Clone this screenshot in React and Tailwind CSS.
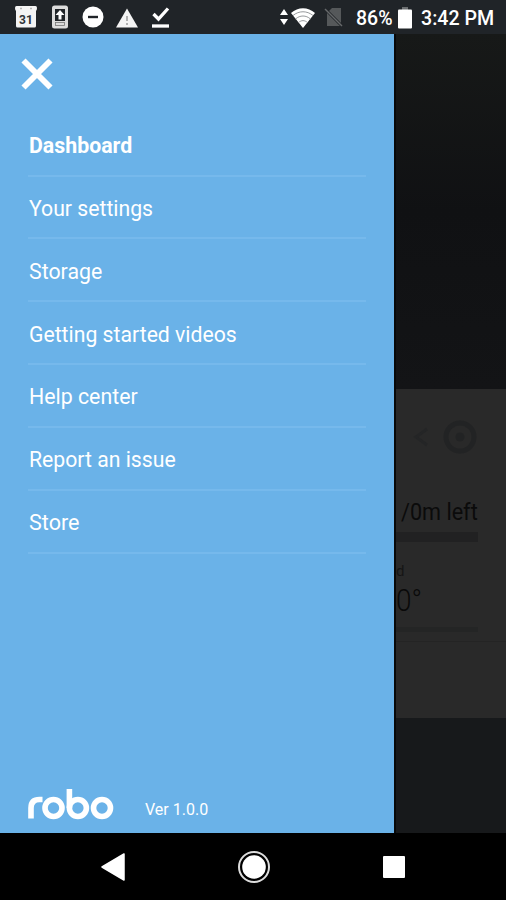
const menu = [
  { label: "Dashboard", cls: "font-bold scale-x-[0.935]" },
  { label: "Your settings", cls: "scale-x-[0.93]" },
  { label: "Storage", cls: "scale-x-[0.935]" },
  { label: "Getting started videos", cls: "scale-x-[0.93]" },
  { label: "Help center", cls: "scale-x-[0.935]" },
  { label: "Report an issue", cls: "scale-x-[0.93]" },
  { label: "Store", cls: "scale-x-[0.945]" },
];

function StatusBar() {
  return (
    <header className="flex h-[34px] w-full shrink-0 items-center bg-[#202428] text-white">
      <svg className="ml-[14px] shrink-0" width="24" height="24" viewBox="0 0 24 24">
        <path d="M2.500 1h19q1.500 0 1.500 2t-1 3v15q0 1.500-1.500 1.500h-17Q2 22.500 2 21V6Q1 5 1 3t1.500-2z" fill="#f4f4f4" />
        <path d="M6 3.500h2M16 3.500h2" stroke="#b5b5b5" strokeWidth="1.500" />
        <text x="12" y="18.500" textAnchor="middle" fontFamily="Roboto, sans-serif" fontWeight="700" fontSize="12" fill="#303438">31</text>
      </svg>
      <svg className="ml-[14px] shrink-0" width="16" height="24" viewBox="0 0 16 24">
        <rect x="0" y="0.500" width="16" height="23" rx="2.500" fill="#dcdcdc" />
        <rect x="3" y="4" width="10" height="12" fill="#202428" />
        <path d="M8 5l4.500 5H9.500v4.500h-3V10h-3z" fill="#fff" />
        <rect x="3.500" y="17.500" width="9" height="3" fill="none" stroke="#777" strokeWidth="0.800" />
      </svg>
      <svg className="ml-[14px] shrink-0" width="22" height="22" viewBox="0 0 22 22">
        <circle cx="11" cy="11" r="10.500" fill="#fff" />
        <path d="M6 11h10" stroke="#202428" strokeWidth="2.400" />
      </svg>
      <svg className="ml-[12px] shrink-0" width="22" height="22" viewBox="0 0 22 22">
        <path d="M11 2.500L22 21.500H0z" fill="#f4f4f4" />
        <path d="M11 10v5M11 17v2" stroke="#aaa" strokeWidth="1.800" />
      </svg>
      <svg className="ml-[13px] shrink-0" width="20" height="22" viewBox="0 0 20 22">
        <path d="M2.500 8l5 5L17 2.500" fill="none" stroke="#fff" strokeWidth="3.300" />
        <path d="M1 20h17" stroke="#fff" strokeWidth="3.300" />
      </svg>
      <svg className="ml-[109px] shrink-0" width="8" height="18" viewBox="0 0 8 18">
        <path d="M4 1l4 6H0zM4 17l4-6H0z" fill="#fff" />
      </svg>
      <svg className="ml-[3px] shrink-0" width="24" height="21" viewBox="0 0 24 21">
        <path d="M12 21L0 6C7-.5 17-.5 24 6z" fill="#fff" />
        <path d="M2 8.500c6-5 14-5 20 0M4.500 12c4.500-4 10.500-4 15 0M7.500 15.500c3-2.500 6-2.500 9 0" fill="none" stroke="#8a8d90" strokeWidth="0.900" />
      </svg>
      <svg className="ml-[9px] shrink-0" width="20" height="20" viewBox="0 0 20 20">
        <path d="M8 1h9v18H3V6z" fill="#55585a" />
        <path d="M1 2l17 17" stroke="#202428" strokeWidth="3" />
        <path d="M1 2l17 17" stroke="#66696b" strokeWidth="1.500" />
      </svg>
      <span className="ml-[12px] mt-[3px] w-[37px] origin-left whitespace-nowrap text-[19.500px] font-medium leading-none">86%</span>
      <svg className="ml-[5px] mt-px shrink-0" width="14" height="22" viewBox="0 0 14 22">
        <path d="M4 0h6v3H4z" fill="#6b6e70" />
        <rect y="2.500" width="14" height="19" rx="1" fill="#fff" />
      </svg>
      <span className="ml-[9px] mt-[3px] whitespace-nowrap text-[19.600px] font-medium leading-none">3:42 PM</span>
    </header>
  );
}

function Logo() {
  return (
    <svg width="86" height="32" viewBox="0 0 86 32" fill="none" stroke="#fff" strokeWidth="5.600" aria-label="robo">
      <path d="M3 30.500V20q0-8.500 8.500-8.500h3" />
      <circle cx="25.500" cy="20" r="8.500" />
      <path d="M41.400 1v19" />
      <circle cx="49.900" cy="20" r="8.500" />
      <circle cx="74" cy="20" r="8.500" />
    </svg>
  );
}

function Drawer() {
  return (
    <aside className="flex w-[394px] shrink-0 flex-col bg-[#6ab2e8] text-white">
      <svg className="ml-[20px] mt-[23px] shrink-0" width="34" height="34" viewBox="0 0 34 34">
        <path d="M3.500 3.500l27 27M30.500 3.500l-27 27" stroke="#fff" strokeWidth="5.800" />
      </svg>
      <nav className="ml-[28px] mt-[22.800px] w-[338px]">
        {menu.map((m) => (
          <div key={m.label} className="flex h-[62.850px] items-center border-b-2 border-[#76b9ec] pl-px pt-[4.500px]">
            <span className={"block origin-left whitespace-nowrap text-[22.800px] leading-none " + m.cls}>{m.label}</span>
          </div>
        ))}
      </nav>
      <div className="mb-[13px] ml-[28px] mt-auto flex items-end">
        <Logo />
        <span className="mb-[2px] ml-[31px] text-[16px] leading-none">Ver 1.0.0</span>
      </div>
    </aside>
  );
}

function Backdrop() {
  return (
    <main className="flex flex-1 flex-col overflow-hidden border-l-2 border-[#08090a] bg-[#17191b]">
      <div className="h-[355px] bg-linear-to-b from-[#171918] via-[#101113] to-[#131416]" />
      <section className="flex h-[329px] flex-col bg-[#292929]">
        <div className="ml-[17px] mt-[30px] flex items-center gap-[14px]">
          <svg width="15" height="20" viewBox="0 0 15 20" fill="none" stroke="#242526" strokeWidth="3">
            <path d="M14 2L3 10l11 8" />
          </svg>
          <svg width="36" height="36" viewBox="0 0 36 36" fill="none" stroke="#222324">
            <circle cx="18" cy="18" r="14" strokeWidth="5" />
            <circle cx="18" cy="18" r="4.500" fill="#222324" stroke="none" />
          </svg>
        </div>
        <div className="ml-[5px] mt-[46px] h-[24px] w-[77px]">
          <span className="block origin-left scale-x-[0.94] whitespace-nowrap text-[23px] leading-[24px] text-[#0b0b0b]">/0m left</span>
        </div>
        <div className="mt-[7px] h-[10px] w-[82px] bg-[#212122]" />
        <span className="mt-[20px] text-[15px] leading-[18px] text-[#151515]">d</span>
        <span className="mt-[5px] origin-left scale-x-[0.9] text-[31px] font-light leading-[32px] text-[#090909]">0°</span>
        <div className="mt-[10px] h-[5px] w-[82px] bg-[#242525]" />
        <div className="mt-[9px] h-px w-full bg-[#242424]" />
      </section>
    </main>
  );
}

function NavBar() {
  return (
    <footer className="flex h-[67px] shrink-0 items-center bg-black">
      <svg className="ml-[100px]" width="26" height="30" viewBox="0 0 26 30">
        <path d="M2 15L24 2v26z" fill="#fff" stroke="#fff" strokeWidth="1.500" strokeLinejoin="round" />
      </svg>
      <svg className="ml-[111px]" width="34" height="34" viewBox="0 0 34 34">
        <circle cx="17" cy="17" r="15" fill="none" stroke="#ddd" strokeWidth="2" />
        <circle cx="17" cy="17" r="11.800" fill="#fff" />
      </svg>
      <div className="ml-[112px] h-[22px] w-[22px] rounded-[1px] bg-white" />
    </footer>
  );
}

export default function App() {
  return (
    <div className="flex h-[900px] w-[506px] flex-col overflow-hidden bg-black font-['Roboto',sans-serif]">
      <StatusBar />
      <div className="flex h-[799px] shrink-0">
        <Drawer />
        <Backdrop />
      </div>
      <NavBar />
    </div>
  );
}
